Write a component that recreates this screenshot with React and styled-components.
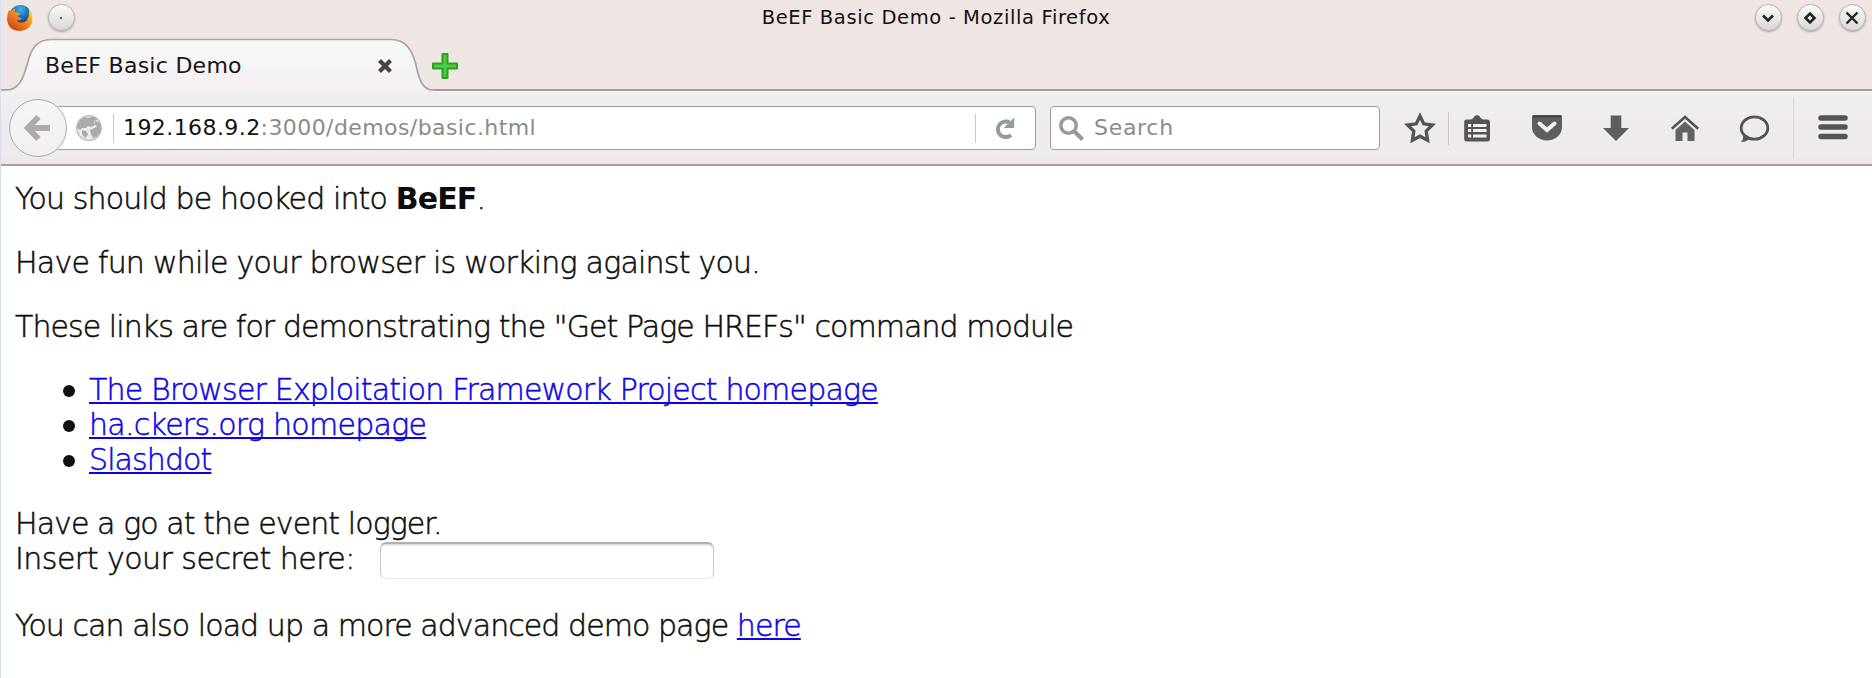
import React from 'react';
import styled, { createGlobalStyle } from 'styled-components';

const GlobalStyle = createGlobalStyle`
  * { box-sizing: border-box; }
  body { margin: 0; background: #fff; font-family: "DejaVu Sans", sans-serif; }
`;

const Window = styled.div`
  width: 1872px;
  height: 678px;
  overflow: hidden;
  display: flex;
  flex-direction: column;
  border-left: 1px solid #d3e2ee;
  background: #fff;
`;

const TitleBar = styled.header`
  height: 36px;
  flex: none;
  display: flex;
  align-items: center;
  padding: 0 6px 0 5px;
  background: #efe6e4;
`;

const TitleSide = styled.div`
  width: 140px;
  display: flex;
  align-items: center;
  justify-content: ${(p) => (p.$end ? 'flex-end' : 'flex-start')};
  gap: ${(p) => (p.$end ? 14 : 13)}px;
`;

const WindowTitle = styled.div`
  flex: 1;
  text-align: center;
  font-size: 19.5px;
  line-height: 24px;
  letter-spacing: ${(p) => p.$spacing}px;
  color: #111;
  white-space: nowrap;
`;

const RoundButton = styled.button`
  width: 27px;
  height: 27px;
  margin: -1px 0.5px 0;
  padding: 0;
  border: 1px solid #b4b0b0;
  border-radius: 50%;
  background: linear-gradient(#fbfbfb, #d9d7d7);
  box-shadow: 0 1px 2px rgba(0, 0, 0, 0.3);
  display: grid;
  place-items: center;
`;

const TabStrip = styled.div`
  height: 55px;
  flex: none;
  display: flex;
  align-items: flex-start;
  background: linear-gradient(#efe6e4 53px, #a39c9d 53px);
`;

const Tab = styled.div`
  position: relative;
  width: 432px;
  height: 55px;
  display: flex;
  align-items: center;
  justify-content: space-between;
  padding: 4px 40px 0 44px;
`;

const TabShape = styled.svg`
  position: absolute;
  left: 0;
  top: 0;
`;

const TabLabel = styled.span`
  position: relative;
  font-size: 22px;
  line-height: 26px;
  letter-spacing: ${(p) => p.$spacing}px;
  color: #151515;
  white-space: nowrap;
`;

const TabClose = styled.svg`
  position: relative;
`;

const NewTab = styled.svg`
  margin: 16px 0 0 -2px;
`;

const Toolbar = styled.nav`
  height: 75px;
  flex: none;
  display: flex;
  align-items: center;
  padding-left: 8px;
  border-top: 1px solid #fbf9f9;
  border-bottom: 2px solid #a69fa0;
  background: linear-gradient(#efefef 0, #efeeee 24px, #eeeaee 32px, #eeeaee 66px, #f0e6e5 68px);
`;

const BackButton = styled.button`
  position: relative;
  z-index: 1;
  width: 58px;
  height: 58px;
  flex: none;
  padding: 0;
  border: 1.5px solid #a9abb2;
  border-radius: 50%;
  background: linear-gradient(#f7f5f7, #f3eef3);
  display: grid;
  place-items: center;
`;

const Field = styled.div`
  height: 44px;
  width: ${(p) => p.$width}px;
  margin-left: ${(p) => p.$offset}px;
  padding-left: ${(p) => p.$inset}px;
  flex: none;
  display: flex;
  align-items: center;
  border: 1.5px solid #a09c9e;
  border-radius: 4px;
  background: #fff;
`;

const Divider = styled.i`
  width: 1px;
  flex: none;
  height: ${(p) => p.$height}px;
  margin: 0 ${(p) => p.$right}px 0 ${(p) => p.$left}px;
  background: ${(p) => p.$color || '#c9c7c9'};
`;

const FieldText = styled.span`
  flex: 1;
  font-size: 22px;
  line-height: 26px;
  letter-spacing: ${(p) => p.$spacing}px;
  margin-left: ${(p) => p.$indent || 0}px;
  color: #8b8b8b;
  white-space: nowrap;
`;

const Host = styled.span`
  color: #111;
`;

const Tools = styled.div`
  display: flex;
  align-items: center;
  margin-left: 22px;
`;

const Tool = styled.svg`
  width: 36px;
  height: 36px;
  flex: none;
  margin-left: ${(p) => p.$gap || 0}px;
`;

const Page = styled.main`
  padding: 16px 0 0 14px;
  font-size: 30px;
  font-weight: 200;
  line-height: 34.8px;
  color: #0c0c0c;
  -webkit-text-stroke: 0.5px currentColor;
  white-space: nowrap;
`;

const Paragraph = styled.p`
  margin: 0 0 29px;
`;

const Run = styled.span`
  letter-spacing: ${(p) => p.$spacing}px;
`;

const Strong = styled.b`
  font-weight: 700;
  -webkit-text-stroke: 0;
`;

const LinkList = styled.ul`
  margin: 0 0 29px;
  padding: 0;
  list-style: none;
`;

const LinkItem = styled.li`
  display: flex;
  align-items: center;
  padding-left: 48px;
  &::before {
    content: '';
    width: 12px;
    height: 12px;
    margin: 1px 14px 0 0;
    border-radius: 50%;
    background: #111;
  }
`;

const Link = styled.a`
  color: #0d04e4;
  letter-spacing: ${(p) => p.$spacing}px;
  text-decoration: underline;
  text-decoration-thickness: 2px;
  text-underline-offset: 2px;
  text-decoration-skip-ink: none;
`;

const SecretRow = styled.span`
  display: flex;
  align-items: flex-start;
  height: 38px;
`;

const SecretInput = styled.input`
  width: 334px;
  height: 37px;
  margin: 0 0 0 25px;
  border: 1px solid #c9c9c9;
  border-top: 2px solid #b0b0b0;
  border-bottom-color: #eaeaea;
  border-radius: 6px;
  background: #fff;
  box-shadow: inset 0 2px 2px -1px rgba(0, 0, 0, 0.2);
`;

const ink = '#545454';

function FirefoxLogo() {
  return (
    <svg width="28" height="28" viewBox="0 0 28 28">
      <defs>
        <radialGradient id="globe" cx=".5" cy=".2" r=".75">
          <stop offset="0" stopColor="#3fb2e6" />
          <stop offset=".5" stopColor="#1a6db0" />
          <stop offset="1" stopColor="#10316c" />
        </radialGradient>
        <linearGradient id="fox" x1="1" y1="0.1" x2="0.2" y2="1">
          <stop offset="0" stopColor="#ffe648" />
          <stop offset=".35" stopColor="#f79a20" />
          <stop offset="1" stopColor="#cf3d12" />
        </linearGradient>
      </defs>
      <circle cx="14.5" cy="12" r="11" fill="url(#globe)" />
      <path d="M3 6 Q1 10 1 15 Q2 27 14 27 Q26.500 26 26.500 13 Q26 7 22.500 4.500 Q24 9 22 14 Q20 19 15 18.500 Q11 18 11 16 Q14 17 16 14 Q12 13.500 11.500 12 L14.500 10 Q12 8.500 9 8 Q8 6.500 9.500 4.500 Q6.500 5 5.500 7 Z" fill="url(#fox)" />
    </svg>
  );
}

function Star() {
  return (
    <Tool viewBox="0 0 36 36">
      <path d="M18 6 L21.7 13.8 L30.4 15 L24.2 21 L25.6 30.2 L18 26.2 L10.4 30.2 L11.8 21 L5.6 15 L14.3 13.8 Z" fill="none" stroke={ink} strokeWidth="3.3" />
    </Tool>
  );
}

function Clipboard() {
  return (
    <Tool $gap={10} viewBox="0 0 36 36">
      <path d="M5.2 12 Q5.2 9.5 8 9.5 H12 L14.5 8 Q15 5.5 18 5 Q21 5.5 21.5 8 L24 9.5 H28 Q31 9.5 31 12 V29 Q31 31.500 28 31.500 H8 Q5.200 31.500 5.200 29 Z" fill={ink} />
      <path d="M9 14h3.200v3H9zM14 14h13.500v3H14zM9 19h3.200v3H9zM14 19h13.500v3H14zM9 24.500h3.200v3H9zM14 24.500h13.500v3H14z" fill="#f4f2f4" />
    </Tool>
  );
}

function Pocket() {
  return (
    <Tool $gap={33.5} viewBox="0 0 36 36">
      <path d="M3 7 Q3 5 5 5 H31 Q33 5 33 7 V17 C33 25 26 30.500 18 30.500 C10 30.500 3 25 3 17 Z" fill="#5e5e5e" />
      <path d="M3.500 6.500H32.500" stroke="#444" strokeWidth="2" />
      <path d="M10.500 13.500 L18 20 L25.500 13.500" fill="none" stroke="#f1eff1" strokeWidth="4" strokeLinecap="round" />
    </Tool>
  );
}

function Download() {
  return (
    <Tool $gap={33} viewBox="0 0 36 36">
      <path d="M12.700 5.500 H23.300 V18 H31 L18 31 L5 18 H12.700 Z" fill="#5e5e5e" />
    </Tool>
  );
}

function Home() {
  return (
    <Tool $gap={33.5} viewBox="0 0 36 36">
      <path d="M4.800 18.800 L18 7 L31.200 18.800" fill="none" stroke={ink} strokeWidth="2.600" />
      <path d="M18 11.500 L27.500 20 V31 H20.500 V22.500 H15.500 V31 H8.500 V20 Z" fill="#626262" />
    </Tool>
  );
}

function Chat() {
  return (
    <Tool $gap={32.5} viewBox="0 0 36 36">
      <ellipse cx="18.500" cy="18" rx="13.300" ry="11.200" fill="none" stroke={ink} strokeWidth="2.800" />
      <path d="M7 24 Q8 29 5 32 Q11 32 14 28 Z" fill={ink} />
    </Tool>
  );
}

function Menu() {
  return (
    <Tool viewBox="0 0 36 36">
      <path d="M6 8H30M6 17H30M6 26.500H30" stroke={ink} strokeWidth="5.500" strokeLinecap="round" />
    </Tool>
  );
}

export default function App() {
  return (
    <>
      <GlobalStyle />
      <Window>
        <TitleBar>
          <TitleSide>
            <FirefoxLogo />
            <RoundButton>
              <svg width="6" height="6" viewBox="0 0 6 6"><circle cx="3" cy="3" r="1.200" fill="#666" /></svg>
            </RoundButton>
          </TitleSide>
          <WindowTitle $spacing={0.62}>BeEF Basic Demo - Mozilla Firefox</WindowTitle>
          <TitleSide $end>
            <RoundButton>
              <svg width="16" height="16" viewBox="0 0 16 16"><path d="M3 5.500 L8 10.500 L13 5.500" fill="none" stroke="#222" strokeWidth="2.600" /></svg>
            </RoundButton>
            <RoundButton>
              <svg width="16" height="16" viewBox="0 0 16 16"><path d="M8 3.500 L12.500 8 L8 12.500 L3.500 8 Z" fill="none" stroke="#222" strokeWidth="2.600" /></svg>
            </RoundButton>
            <RoundButton>
              <svg width="16" height="16" viewBox="0 0 16 16"><path d="M2.500 2.500 L13.500 13.500 M13.500 2.500 L2.500 13.500" fill="none" stroke="#222" strokeWidth="2.400" /></svg>
            </RoundButton>
          </TitleSide>
        </TitleBar>
        <TabStrip>
          <Tab>
            <TabShape width="432" height="56" viewBox="0 0 432 56">
              <defs>
                <linearGradient id="tabfill" x1="0" y1="0" x2="0" y2="1">
                  <stop offset="0" stopColor="#f8f8f8" />
                  <stop offset=".5" stopColor="#f6f5f6" />
                  <stop offset=".62" stopColor="#f6f1f6" />
                  <stop offset=".9" stopColor="#f5f1f5" />
                  <stop offset="1" stopColor="#efefef" />
                </linearGradient>
              </defs>
              <path d="M0 54 H5 C18 54 22 43 26 29 C30 12 36 3.500 50 3.500 H390 C405 3.500 411 14 415 29 C418 43 421 54 432 54 V56 H0 Z" fill="url(#tabfill)" />
              <path d="M0 54 H5 C18 54 22 43 26 29 C30 12 36 3.500 50 3.500 H390 C405 3.500 411 14 415 29 C418 43 421 54 432 54" fill="none" stroke="#a3a5ab" strokeWidth="1.700" />
            </TabShape>
            <TabLabel $spacing={0.27}>BeEF Basic Demo</TabLabel>
            <TabClose width="16" height="16" viewBox="0 0 16 16">
              <path d="M2.500 2.500 L13.500 13.500 M13.500 2.500 L2.500 13.500" stroke="#444" strokeWidth="4.200" />
            </TabClose>
          </Tab>
          <NewTab width="28" height="28" viewBox="0 0 28 28">
            <path d="M11.500 2 H16.500 V11.500 H26 V16.500 H16.500 V26 H11.500 V16.500 H2 V11.500 H11.500 Z" fill="#4fca45" stroke="#2aa026" strokeWidth="2" strokeLinejoin="round" />
          </NewTab>
        </TabStrip>
        <Toolbar>
          <BackButton>
            <svg width="28" height="28" viewBox="0 0 28 28">
              <path d="M14.500 3 L4 14 L14.500 25 M5 14 H26" fill="none" stroke="#acabac" strokeWidth="6" />
            </svg>
          </BackButton>
          <Field $width={981} $offset={-12} $inset={20}>
            <svg width="26" height="26" viewBox="0 0 26 26">
              <circle cx="13" cy="13" r="12.300" fill="#ebebeb" stroke="#b8b8b8" strokeWidth="1.300" />
              <path d="M2 9 Q4 4 9 2 L12 3 L17 1.500 L21 4 L18 7 L19 10 L15 12 L12 11 L10 13 L6 13 L4 15 L1 13ZM19 6 L23 7 Q25 10 25 14 L24 18 L20 22 L17 23 L15 19 L14 15 L18 13 L21 12 L19 9ZM6 15 L10 16 L12 19 L10 23 L8 22 L6 19Z" fill="#aaa" />
            </svg>
            <Divider $height={29} $left={11} $right={9} />
            <FieldText $spacing={0.42}><Host>192.168.9.2</Host>:3000/demos/basic.html</FieldText>
            <Divider $height={29} $left={0} $right={15} />
            <svg width="44" height="24" viewBox="0 0 44 24">
              <path d="M20 19 A7.800 7.800 0 1 1 18.500 6.500" fill="none" stroke="#929aa6" strokeWidth="4" />
              <path d="M23.200 1.500 V12 H12.700 Z" fill="#929aa6" />
            </svg>
          </Field>
          <Field $width={330} $offset={14} $inset={7}>
            <svg width="27" height="27" viewBox="0 0 27 27">
              <circle cx="10.500" cy="10.500" r="7.700" fill="none" stroke="#999" strokeWidth="3.500" />
              <path d="M16 16 L24.500 24.500" stroke="#999" strokeWidth="4.300" />
            </svg>
            <FieldText $spacing={0.7} $indent={9}>Search</FieldText>
          </Field>
          <Tools>
            <Star />
            <Divider $height={33} $left={10} $right={0} />
            <Clipboard />
            <Pocket />
            <Download />
            <Home />
            <Chat />
            <Divider $height={62} $left={21} $right={21} $color="#d9d5d8" />
            <Menu />
          </Tools>
        </Toolbar>
        <Page>
          <Paragraph><Run $spacing={-0.87}>You should be hooked into <Strong>BeEF</Strong>.</Run></Paragraph>
          <Paragraph><Run $spacing={-0.77}>Have fun while your browser is working against you.</Run></Paragraph>
          <Paragraph><Run $spacing={-0.93}>These links are for demonstrating the "Get Page HREFs" command module</Run></Paragraph>
          <LinkList>
            <LinkItem><Link $spacing={-0.81}>The Browser Exploitation Framework Project homepage</Link></LinkItem>
            <LinkItem><Link $spacing={-0.72}>ha.ckers.org homepage</Link></LinkItem>
            <LinkItem><Link $spacing={-0.9}>Slashdot</Link></LinkItem>
          </LinkList>
          <Paragraph>
            <Run $spacing={-0.92}>Have a go at the event logger.</Run>
            <SecretRow>
              <Run $spacing={-0.52}>Insert your secret here:</Run>
              <SecretInput />
            </SecretRow>
          </Paragraph>
          <Paragraph><Run $spacing={-0.93}>You can also load up a more advanced demo page </Run><Link $spacing={-0.9}>here</Link></Paragraph>
        </Page>
      </Window>
    </>
  );
}
